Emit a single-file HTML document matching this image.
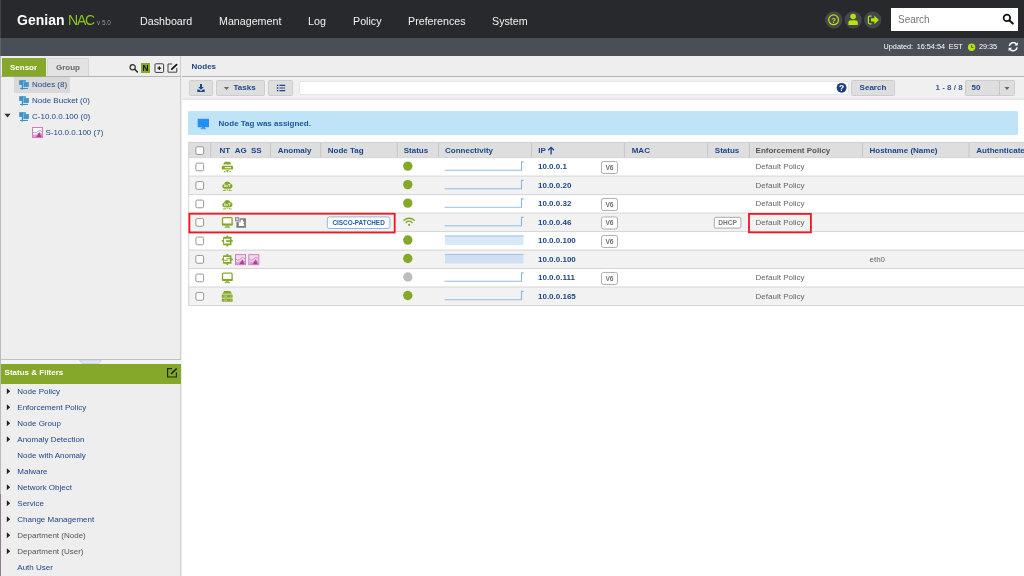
<!DOCTYPE html>
<html><head><meta charset="utf-8">
<style>
*{box-sizing:border-box;margin:0;padding:0}
html,body{width:1024px;height:576px;overflow:hidden;background:#fff;font-family:"Liberation Sans",sans-serif;font-size:8px;color:#1c4587}
.abs,.t,.b{position:absolute;white-space:nowrap}
.t{line-height:10px;height:10px}
.b{font-weight:bold}
#top{will-change:transform;position:absolute;left:0;top:0;width:1024px;height:38px;background:#27292d}
#sub{will-change:transform;position:absolute;left:0;top:38px;width:1024px;height:18px;background:#494e57}
#left{will-change:transform;position:absolute;left:0;top:56px;width:182px;height:520px;background:#eee;border-left:1px solid #bbb;border-right:1px solid #eee}
#main{will-change:transform;position:absolute;left:182px;top:56px;width:842px;height:520px;background:#fff}
.nav{position:absolute;top:14px;height:14px;line-height:14px;font-size:10.7px;color:#f2f2f2;white-space:nowrap}
</style></head><body>
<div id="top">
  <div class="abs" style="left:17px;top:9px;height:22px;line-height:22px;font-size:14px;font-weight:bold;color:#fff;letter-spacing:0.04px">Genian</div>
  <div class="abs" style="left:68px;top:9px;height:22px;line-height:22px;font-size:14px;color:#8cc220;letter-spacing:-1.2px">NAC</div>
  <div class="abs" style="left:97px;top:18px;height:10px;line-height:10px;font-size:6.4px;color:#9a9a9a">v 5.0</div>
  <div class="nav" style="left:140px">Dashboard</div>
  <div class="nav" style="left:219px">Management</div>
  <div class="nav" style="left:308px">Log</div>
  <div class="nav" style="left:353px">Policy</div>
  <div class="nav" style="left:408px">Preferences</div>
  <div class="nav" style="left:492px">System</div>
  <svg class="abs" style="left:824px;top:10px" width="60" height="20" viewBox="0 0 60 20">
    <circle cx="9.8" cy="9.9" r="8.7" fill="#45474a"/><circle cx="29.2" cy="9.9" r="8.6" fill="#45474a"/><circle cx="48.7" cy="9.9" r="8.6" fill="#45474a"/>
    <circle cx="9.6" cy="9.8" r="4.9" fill="none" stroke="#b4e50d" stroke-width="1.2"/>
    <text x="9.6" y="12.7" text-anchor="middle" font-family="Liberation Sans, sans-serif" font-weight="bold" font-size="8" fill="#b4e50d">?</text>
    <circle cx="29.1" cy="6.5" r="2.8" fill="#b4e50d"/><path d="M24.4 14.9V12.6A2.4 2.4 0 0 1 26.8 10.2H31.4A2.4 2.4 0 0 1 33.8 12.6V14.9Z" fill="#b4e50d"/>
    <path d="M47.6 6.2H45.6A1.2 1.2 0 0 0 44.4 7.4V12.6A1.2 1.2 0 0 0 45.6 13.8H47.6" fill="none" stroke="#b4e50d" stroke-width="1.2"/>
    <path d="M47 8.2H50.4V5.6L54.9 9.9L50.4 14.2V11.6H47Z" fill="#b4e50d"/>
  </svg>
  <div class="abs" style="left:891px;top:8px;width:127px;height:23px;background:#fff"></div>
  <div class="abs" style="left:898px;top:13.6px;height:12px;line-height:12px;font-size:10px;color:#777">Search</div>
  <svg class="abs" style="left:1002px;top:13px" width="13" height="12" viewBox="-0.4 -0.6 13 12"><circle cx="4.5" cy="4.3" r="3.3" fill="none" stroke="#111" stroke-width="1.7"/><path d="M7 6.8L10.4 10" stroke="#111" stroke-width="2" stroke-linecap="round"/></svg>
</div>
<div id="sub">
  <div class="abs" style="left:883.6px;top:4.2px;height:10px;line-height:10px;font-size:7.25px;word-spacing:1.7px;color:#fff">Updated: 16:54:54 EST</div>
  <div class="abs" style="left:979px;top:4.2px;height:10px;line-height:10px;font-size:7.25px;color:#fff">29:35</div>
  <svg class="abs" style="left:967px;top:5px" width="9" height="9" viewBox="-0.6 -0.2 9 9"><circle cx="4" cy="4" r="3.7" fill="#b4e50d"/><path d="M4 1.8V4.3H5.8" fill="none" stroke="#494e57" stroke-width="0.9"/></svg>
  <svg class="abs" style="left:1008px;top:4px" width="11" height="10" viewBox="0 0 11 10"><path d="M1.3 4A4 4 0 0 1 8.2 1.9" fill="none" stroke="#fff" stroke-width="1.5"/><path d="M9.8 0.2V3.6H6.4Z" fill="#fff"/><path d="M9.1 5.4A4 4 0 0 1 2.2 7.5" fill="none" stroke="#fff" stroke-width="1.5"/><path d="M0.6 9.2V5.8H4Z" fill="#fff"/></svg>
</div>
<div class="abs" style="left:0;top:0;width:1px;height:56px;background:rgba(255,255,255,0.13)"></div>
<div id="left">
  <div class="abs" style="left:179px;top:0;width:1px;height:520px;background:#cfcfcf"></div>
  <div class="abs" style="left:0;top:20px;width:180px;height:1px;background:#b4b4b4"></div>
  <div class="abs" style="left:1px;top:2px;width:44px;height:19px;background:#86a82a"></div>
  <div class="abs" style="left:1px;top:20px;width:44px;height:1px;background:#98a868"></div>
  <div class="t b" style="left:9px;top:7px;color:#fff">Sensor</div>
  <div class="abs" style="left:46px;top:2px;width:42px;height:18px;background:#e3e3e3;border:1px solid #d4d4d4;border-bottom:none;border-radius:1.5px 1.5px 0 0"></div>
  <div class="t b" style="left:55px;top:7px;color:#666">Group</div>
  <svg class="abs" style="left:128px;top:7px" width="10" height="11" viewBox="0 -0.6 10 11"><circle cx="3.7" cy="3.7" r="2.6" fill="none" stroke="#2a2a2a" stroke-width="1.2"/><path d="M5.7 5.7L8.3 8.3" stroke="#2a2a2a" stroke-width="1.5" stroke-linecap="round"/></svg>
  <div class="abs" style="left:140px;top:7px;width:9px;height:10px;background:#86a82a"></div>
  <div class="t b" style="left:141.4px;top:7px;color:#111;font-size:8.4px">N</div>
  <svg class="abs" style="left:153px;top:7px" width="11" height="11" viewBox="0 0 11 11"><rect x="1" y="0.8" width="8.6" height="8.6" rx="0.9" fill="#f4f4f4" stroke="#3a3a3a" stroke-width="1"/><path d="M5.3 3.2V7M3.4 5.1H7.2" stroke="#222" stroke-width="1.3"/></svg>
  <svg class="abs" style="left:165px;top:7px" width="13" height="11" viewBox="-0.2 0 13 11"><path d="M10.6 5V9.2H1.8V1H6" fill="none" stroke="#444" stroke-width="1"/><path d="M5.6 6.2L10.4 1.6" stroke="#111" stroke-width="1.7" stroke-linecap="round"/></svg>
  <div class="abs" style="left:13px;top:21px;width:56px;height:16px;background:#d9d9d9"></div>
  <svg class="abs" style="left:18px;top:24px" width="11" height="10" viewBox="0 0 11 10"><rect x="0.2" y="0.2" width="6.8" height="4.7" fill="#3d8fc6"/><rect x="2.8" y="4.9" width="1.2" height="3.1" fill="#3d8fc6"/><rect x="1.1" y="7.9" width="7.8" height="1.1" fill="#3d8fc6"/><path d="M2 9L3.2 9.7L4.4 9Z" fill="#3d8fc6"/><rect x="4" y="1.7" width="6.2" height="5.6" fill="#cfe2f1"/><rect x="4.4" y="2.1" width="5.4" height="4.8" fill="#4394c9"/></svg>
  <div class="t" style="left:31px;top:24px">Nodes (8)</div>
  <svg class="abs" style="left:18px;top:40px" width="11" height="10" viewBox="0 0 11 10"><rect x="0.2" y="0.2" width="6.8" height="4.7" fill="#3d8fc6"/><rect x="2.8" y="4.9" width="1.2" height="3.1" fill="#3d8fc6"/><rect x="1.1" y="7.9" width="7.8" height="1.1" fill="#3d8fc6"/><path d="M2 9L3.2 9.7L4.4 9Z" fill="#3d8fc6"/><rect x="4" y="1.7" width="6.2" height="5.6" fill="#cfe2f1"/><rect x="4.4" y="2.1" width="5.4" height="4.8" fill="#4394c9"/></svg>
  <div class="t" style="left:31px;top:40px">Node Bucket (0)</div>
  <svg class="abs" style="left:3px;top:57px" width="7" height="5" viewBox="-0.4 -0.8 7 5"><path d="M0 0H6.2L3.1 3.6Z" fill="#333"/></svg>
  <svg class="abs" style="left:18px;top:56px" width="11" height="10" viewBox="0 0 11 10"><rect x="0.2" y="0.2" width="6.8" height="4.7" fill="#3d8fc6"/><rect x="2.8" y="4.9" width="1.2" height="3.1" fill="#3d8fc6"/><rect x="1.1" y="7.9" width="7.8" height="1.1" fill="#3d8fc6"/><path d="M2 9L3.2 9.7L4.4 9Z" fill="#3d8fc6"/><rect x="4" y="1.7" width="6.2" height="5.6" fill="#cfe2f1"/><rect x="4.4" y="2.1" width="5.4" height="4.8" fill="#4394c9"/></svg>
  <div class="t" style="left:31px;top:56px">C-10.0.0.100 (0)</div>
  <svg class="abs" style="left:31px;top:71px" width="11" height="11" viewBox="0 0 11 11"><rect x="0.5" y="0.5" width="10" height="10" fill="#fff" stroke="#cf7fbd" stroke-width="1"/><path d="M1 10V6.9L2.8 7.6L4.6 7.2L7.4 4.6L9 5.8L10 6.6V10Z" fill="#dd9fcf"/><path d="M4.2 10L7.4 5.6L9.6 10Z" fill="#b53a98"/><path d="M1 6.9L2.8 7.6L4.6 7.2L7.4 4.6L9 5.8L10 6.6" fill="none" stroke="#fff" stroke-width="0.6" stroke-dasharray="0.8 0.6"/><path d="M1 5.2L2.6 6L4.4 5.6L7.4 3.2L9 4L10 4.9" fill="none" stroke="#d88cc8" stroke-width="1"/></svg>
  <div class="t" style="left:44.5px;top:72px">S-10.0.0.100 (7)</div>
  <div class="abs" style="left:0;top:303px;width:180px;height:1px;background:#c2c2c2"></div>
  <div class="abs" style="left:0;top:304px;width:180px;height:4px;background:#f3f3f3"></div>
  <svg class="abs" style="left:78px;top:304px" width="23" height="4" viewBox="0 0 23 4"><path d="M0.5 0H22.5L20 3.5H3Z" fill="#dfe6f6" stroke="#b9c4dd" stroke-width="0.6"/></svg>
  <div class="abs" style="left:0;top:308px;width:180px;height:20px;background:#86a82a"></div>
  <div class="t b" style="left:3.6px;top:312px;color:#fff">Status &amp; Filters</div>
  <svg class="abs" style="left:165px;top:311px" width="12" height="11" viewBox="0 0 12 11"><path d="M10.4 5.4V10H1.6V1.6H6" fill="none" stroke="#1e2a10" stroke-width="1.2"/><path d="M5.6 6.4L10.2 2" stroke="#1e2a10" stroke-width="1.7" stroke-linecap="round"/></svg>
  <svg class="abs" style="left:5px;top:332px" width="5" height="7" viewBox="-0.8 -0.2 5 7"><path d="M0 0L3.4 3L0 6Z" fill="#222"/></svg>
  <div class="t" style="left:16.3px;top:331.4px">Node Policy</div>
  <svg class="abs" style="left:5px;top:348px" width="5" height="7" viewBox="-0.8 -0.2 5 7"><path d="M0 0L3.4 3L0 6Z" fill="#222"/></svg>
  <div class="t" style="left:16.3px;top:347.4px">Enforcement Policy</div>
  <svg class="abs" style="left:5px;top:364px" width="5" height="7" viewBox="-0.8 -0.2 5 7"><path d="M0 0L3.4 3L0 6Z" fill="#222"/></svg>
  <div class="t" style="left:16.3px;top:363.4px">Node Group</div>
  <svg class="abs" style="left:5px;top:380px" width="5" height="7" viewBox="-0.8 -0.2 5 7"><path d="M0 0L3.4 3L0 6Z" fill="#222"/></svg>
  <div class="t" style="left:16.3px;top:379.4px">Anomaly Detection</div>
  <div class="t" style="left:16.3px;top:395.4px">Node with Anomaly</div>
  <svg class="abs" style="left:5px;top:412px" width="5" height="7" viewBox="-0.8 -0.2 5 7"><path d="M0 0L3.4 3L0 6Z" fill="#222"/></svg>
  <div class="t" style="left:16.3px;top:411.4px">Malware</div>
  <svg class="abs" style="left:5px;top:428px" width="5" height="7" viewBox="-0.8 -0.2 5 7"><path d="M0 0L3.4 3L0 6Z" fill="#222"/></svg>
  <div class="t" style="left:16.3px;top:427.4px">Network Object</div>
  <svg class="abs" style="left:5px;top:444px" width="5" height="7" viewBox="-0.8 -0.2 5 7"><path d="M0 0L3.4 3L0 6Z" fill="#222"/></svg>
  <div class="t" style="left:16.3px;top:443.4px">Service</div>
  <svg class="abs" style="left:5px;top:460px" width="5" height="7" viewBox="-0.8 -0.2 5 7"><path d="M0 0L3.4 3L0 6Z" fill="#222"/></svg>
  <div class="t" style="left:16.3px;top:459.4px">Change Management</div>
  <svg class="abs" style="left:5px;top:476px" width="5" height="7" viewBox="-0.8 -0.2 5 7"><path d="M0 0L3.4 3L0 6Z" fill="#222"/></svg>
  <div class="t" style="left:16.3px;top:475.4px;color:#555">Department (Node)</div>
  <svg class="abs" style="left:5px;top:492px" width="5" height="7" viewBox="-0.8 -0.2 5 7"><path d="M0 0L3.4 3L0 6Z" fill="#222"/></svg>
  <div class="t" style="left:16.3px;top:491.4px;color:#555">Department (User)</div>
  <div class="t" style="left:16.3px;top:507.4px">Auth User</div>
</div>
<div class="abs" style="left:0;top:494px;width:1px;height:82px;background:#8f7c90"></div>
<div id="main">
<div class="abs" style="left:0;top:0;width:842px;height:20px;background:#eee"></div>
<div class="abs" style="left:0;top:20px;width:842px;height:1px;background:#b4b4b4"></div>
<div class="t b" style="left:9.6px;top:6px">Nodes</div>
<div class="abs" style="left:0;top:21px;width:842px;height:21.5px;background:#f1f0f0"></div>
<div class="abs" style="left:0;top:42px;width:842px;height:1px;background:#e9e8e8"></div><div class="abs" style="left:0;top:43px;width:842px;height:1px;background:#e6e6e6"></div>
<div class="abs" style="left:7px;top:24px;width:24px;height:16px;background:#dedede;border:1px solid #cdcdcd;border-radius:1.5px"><svg class="abs" style="left:7px;top:3px" width="8" height="8" viewBox="0 0 8 8"><path d="M3 0H5V3H6.8L4 5.8L1.2 3H3Z" fill="#1c4587"/><path d="M0.3 5.6H2.2L4 7.2L5.8 5.6H7.7V8H0.3Z" fill="#1c4587"/></svg></div>
<div class="abs" style="left:34px;top:24px;width:48.5px;height:16px;background:#dedede;border:1px solid #cdcdcd;border-radius:1.5px"><svg class="abs" style="left:7px;top:6px" width="5" height="3" viewBox="0 0 5 3"><path d="M0 0H5L2.5 3Z" fill="#666"/></svg><div class="t b" style="left:16.5px;top:2px">Tasks</div></div>
<div class="abs" style="left:86px;top:24px;width:25.4px;height:16px;background:#dedede;border:1px solid #cdcdcd;border-radius:1.5px"><svg class="abs" style="left:7px;top:3px" width="10" height="8" viewBox="-0.8 -0.5 10 8"><path d="M0 0.2H1.5V1.6H0ZM0 2.8H1.5V4.2H0ZM0 5.4H1.5V6.8H0ZM2.6 0.3H8.4V1.5H2.6ZM2.6 2.9H8.4V4.1H2.6ZM2.6 5.5H8.4V6.7H2.6Z" fill="#1c4587"/></svg></div>
<div class="abs" style="left:116.5px;top:24.5px;width:550px;height:14px;background:#fff;border:1px solid #e4e4e4;border-radius:2px"></div>
<svg class="abs" style="left:654px;top:26px" width="11" height="11" viewBox="-0.6 -0.8 11 11"><circle cx="5" cy="5" r="4.9" fill="#1c3f7c"/><text x="5" y="8" text-anchor="middle" font-family="Liberation Sans, sans-serif" font-weight="bold" font-size="8.4" fill="#fff">?</text></svg>
<div class="abs" style="left:669px;top:24px;width:44px;height:16px;background:#dedede;border:1px solid #cdcdcd;border-radius:1.5px"><div class="t b" style="left:7.6px;top:2px">Search</div></div>
<div class="t b" style="left:753.5px;top:27px;color:#3a5b9b">1 - 8 / 8</div>
<div class="abs" style="left:783px;top:24px;width:50px;height:16px;background:#dedede;border:1px solid #cdcdcd;border-radius:1.5px"><div class="t b" style="left:5.6px;top:2px">50</div><div class="abs" style="left:33px;top:0;width:1px;height:14px;background:#c4c4c4"></div><svg class="abs" style="left:38px;top:6px" width="6" height="3" viewBox="-0.5 0 6 3"><path d="M0 0H5L2.5 3Z" fill="#666"/></svg></div>
<div class="abs" style="left:6.4px;top:55.4px;width:829.6px;height:23.2px;background:#bfe3f7;border-radius:1.5px"></div>
<svg class="abs" style="left:15px;top:62px" width="13" height="12" viewBox="-0.4 -0.6 13 12"><rect x="0.7" y="0.6" width="10.4" height="7.6" fill="#1e90ff" stroke="#2a80d6" stroke-width="0.8"/><rect x="4.2" y="8.6" width="3.4" height="1.1" fill="#2a80d6"/><rect x="3.2" y="9.7" width="5.4" height="0.9" fill="#3d8fdc"/></svg>
<div class="t b" style="left:36.6px;top:63.2px;color:#1c5799">Node Tag was assigned.</div>
<svg class="abs" style="left:0;top:84px" width="842" height="170" viewBox="182 140 842 170"><rect x="188.2" y="141.9" width="835.8" height="15.70" fill="#dedede"/><rect x="188.2" y="157.60" width="835.8" height="18.49" fill="#fff"/><rect x="188.2" y="176.09" width="835.8" height="18.49" fill="#f2f2f2"/><rect x="188.2" y="194.58" width="835.8" height="18.49" fill="#fff"/><rect x="188.2" y="213.07" width="835.8" height="18.49" fill="#f2f2f2"/><rect x="188.2" y="231.56" width="835.8" height="18.49" fill="#fff"/><rect x="188.2" y="250.05" width="835.8" height="18.49" fill="#f2f2f2"/><rect x="188.2" y="268.54" width="835.8" height="18.49" fill="#fff"/><rect x="188.2" y="287.03" width="835.8" height="18.49" fill="#f2f2f2"/><path d="M188.2 142.4H1024" stroke="#d2d2d2" stroke-width="1" fill="none"/><path d="M188.2 157.60H1024" stroke="#d4d4d4" stroke-width="1" fill="none"/><path d="M188.2 176.09H1024" stroke="#d4d4d4" stroke-width="1" fill="none"/><path d="M188.2 194.58H1024" stroke="#d4d4d4" stroke-width="1" fill="none"/><path d="M188.2 213.07H1024" stroke="#d4d4d4" stroke-width="1" fill="none"/><path d="M188.2 231.56H1024" stroke="#d4d4d4" stroke-width="1" fill="none"/><path d="M188.2 250.05H1024" stroke="#d4d4d4" stroke-width="1" fill="none"/><path d="M188.2 268.54H1024" stroke="#d4d4d4" stroke-width="1" fill="none"/><path d="M188.2 287.03H1024" stroke="#d4d4d4" stroke-width="1" fill="none"/><path d="M188.2 305.52H1024" stroke="#d4d4d4" stroke-width="1" fill="none"/><path d="M188.7 142V305.52" stroke="#d4d4d4" stroke-width="1" fill="none"/><path d="M210.7 143V157.10" stroke="#c4c4c4" stroke-width="1" fill="none"/><path d="M270.4 143V157.10" stroke="#c4c4c4" stroke-width="1" fill="none"/><path d="M320.7 143V157.10" stroke="#c4c4c4" stroke-width="1" fill="none"/><path d="M397.3 143V157.10" stroke="#c4c4c4" stroke-width="1" fill="none"/><path d="M438.5 143V157.10" stroke="#c4c4c4" stroke-width="1" fill="none"/><path d="M531.4 143V157.10" stroke="#c4c4c4" stroke-width="1" fill="none"/><path d="M624.4 143V157.10" stroke="#c4c4c4" stroke-width="1" fill="none"/><path d="M707.7 143V157.10" stroke="#c4c4c4" stroke-width="1" fill="none"/><path d="M749.4 143V157.10" stroke="#c4c4c4" stroke-width="1" fill="none"/><path d="M862.4 143V157.10" stroke="#c4c4c4" stroke-width="1" fill="none"/><path d="M969 143V157.10" stroke="#c4c4c4" stroke-width="1" fill="none"/></svg>
<div class="t b" style="left:37.5px;top:89.6px">NT</div>
<div class="t b" style="left:52.8px;top:89.6px">AG</div>
<div class="t b" style="left:68.9px;top:89.6px">SS</div>
<div class="t b" style="left:95.7px;top:89.6px">Anomaly</div>
<div class="t b" style="left:145.8px;top:89.6px">Node Tag</div>
<div class="t b" style="left:221.7px;top:89.6px">Status</div>
<div class="t b" style="left:263px;top:89.6px">Connectivity</div>
<div class="t b" style="left:356.2px;top:89.6px">IP</div>
<div class="t b" style="left:449.7px;top:89.6px">MAC</div>
<div class="t b" style="left:532.8px;top:89.6px">Status</div>
<div class="t b" style="left:573.6px;top:89.6px;color:#555">Enforcement Policy</div>
<div class="t b" style="left:687.5px;top:89.6px">Hostname (Name)</div>
<div class="t b" style="left:794.3px;top:89.6px">Authenticated User</div>
<svg class="abs" style="left:365px;top:90px" width="8" height="9" viewBox="-0.6 -0.6 8 9"><path d="M3.5 0.6V8M0.6 3.6L3.5 0.7L6.4 3.6" fill="none" stroke="#1c4587" stroke-width="1.3"/></svg>
<svg class="abs" style="left:13px;top:89px" width="10" height="11" viewBox="0 -0.9 10 11"><rect x="0.9" y="0.9" width="7.7" height="7.7" rx="1.3" fill="#fff" stroke="#8c8c8c" stroke-width="0.9"/></svg>
<svg class="abs" style="left:13px;top:106px" width="10" height="10" viewBox="0 -0.2 10 10"><rect x="0.9" y="0.9" width="7.7" height="7.7" rx="1.3" fill="#fff" stroke="#8c8c8c" stroke-width="0.9"/></svg>
<svg class="abs" style="left:13px;top:124px" width="10" height="11" viewBox="0 -0.69 10 11"><rect x="0.9" y="0.9" width="7.7" height="7.7" rx="1.3" fill="#fff" stroke="#8c8c8c" stroke-width="0.9"/></svg>
<svg class="abs" style="left:13px;top:143px" width="10" height="10" viewBox="0 -0.18 10 10"><rect x="0.9" y="0.9" width="7.7" height="7.7" rx="1.3" fill="#fff" stroke="#8c8c8c" stroke-width="0.9"/></svg>
<svg class="abs" style="left:13px;top:161px" width="10" height="11" viewBox="0 -0.67 10 11"><rect x="0.9" y="0.9" width="7.7" height="7.7" rx="1.3" fill="#fff" stroke="#8c8c8c" stroke-width="0.9"/></svg>
<svg class="abs" style="left:13px;top:180px" width="10" height="10" viewBox="0 -0.16 10 10"><rect x="0.9" y="0.9" width="7.7" height="7.7" rx="1.3" fill="#fff" stroke="#8c8c8c" stroke-width="0.9"/></svg>
<svg class="abs" style="left:13px;top:198px" width="10" height="11" viewBox="0 -0.65 10 11"><rect x="0.9" y="0.9" width="7.7" height="7.7" rx="1.3" fill="#fff" stroke="#8c8c8c" stroke-width="0.9"/></svg>
<svg class="abs" style="left:13px;top:217px" width="10" height="10" viewBox="0 -0.14 10 10"><rect x="0.9" y="0.9" width="7.7" height="7.7" rx="1.3" fill="#fff" stroke="#8c8c8c" stroke-width="0.9"/></svg>
<svg class="abs" style="left:13px;top:235px" width="10" height="11" viewBox="0 -0.63 10 11"><rect x="0.9" y="0.9" width="7.7" height="7.7" rx="1.3" fill="#fff" stroke="#8c8c8c" stroke-width="0.9"/></svg>
<svg class="abs" style="left:220px;top:105px" width="11" height="11" viewBox="-0.8 -0.1 11 11"><circle cx="5" cy="5" r="4.7" fill="#86a82a"/></svg>
<svg class="abs" style="left:220px;top:123px" width="11" height="11" viewBox="-0.8 -0.59 11 11"><circle cx="5" cy="5" r="4.7" fill="#86a82a"/></svg>
<svg class="abs" style="left:220px;top:142px" width="11" height="11" viewBox="-0.8 -0.08 11 11"><circle cx="5" cy="5" r="4.7" fill="#86a82a"/></svg>
<svg class="abs" style="left:221px;top:160px" width="13" height="11" viewBox="-0.1 -0.97 13 11"><path d="M0.9 3.3A7.3 7.3 0 0 1 11.1 3.3" fill="none" stroke="#86a82a" stroke-width="1.4" stroke-linecap="round"/><path d="M3 5.5A4.4 4.4 0 0 1 9 5.5" fill="none" stroke="#86a82a" stroke-width="1.4" stroke-linecap="round"/><circle cx="6" cy="7.9" r="1.1" fill="#86a82a"/></svg>
<svg class="abs" style="left:220px;top:179px" width="11" height="11" viewBox="-0.8 -0.06 11 11"><circle cx="5" cy="5" r="4.7" fill="#86a82a"/></svg>
<svg class="abs" style="left:220px;top:197px" width="11" height="11" viewBox="-0.8 -0.55 11 11"><circle cx="5" cy="5" r="4.7" fill="#86a82a"/></svg>
<svg class="abs" style="left:220px;top:216px" width="11" height="11" viewBox="-0.8 -0.04 11 11"><circle cx="5" cy="5" r="4.7" fill="#bdbdbd"/></svg>
<svg class="abs" style="left:220px;top:234px" width="11" height="11" viewBox="-0.8 -0.53 11 11"><circle cx="5" cy="5" r="4.7" fill="#86a82a"/></svg>
<svg class="abs" style="left:262px;top:104px" width="81" height="13" viewBox="-0.6 -0.6 81 13"><path d="M0 9.7H76.9" fill="none" stroke="#86b7ea" stroke-width="0.9"/><path d="M76.9 10.1V1.3H79" fill="none" stroke="#86b7ea" stroke-width="1.1"/></svg>
<svg class="abs" style="left:262px;top:123px" width="81" height="13" viewBox="-0.6 -0.09 81 13"><path d="M0 9.7H76.9" fill="none" stroke="#86b7ea" stroke-width="0.9"/><path d="M76.9 10.1V1.3H79" fill="none" stroke="#86b7ea" stroke-width="1.1"/></svg>
<svg class="abs" style="left:262px;top:141px" width="81" height="13" viewBox="-0.6 -0.58 81 13"><path d="M0 9.7H76.9" fill="none" stroke="#86b7ea" stroke-width="0.9"/><path d="M76.9 10.1V1.3H79" fill="none" stroke="#86b7ea" stroke-width="1.1"/></svg>
<svg class="abs" style="left:262px;top:160px" width="81" height="13" viewBox="-0.6 -0.07 81 13"><path d="M0 9.7H76.9" fill="none" stroke="#86b7ea" stroke-width="0.9"/><path d="M76.9 10.1V1.3H79" fill="none" stroke="#86b7ea" stroke-width="1.1"/></svg>
<svg class="abs" style="left:262px;top:178px" width="81" height="13" viewBox="-0.6 -0.56 81 13"><rect x="0.4" y="1.2" width="78.4" height="9.2" fill="#d9e8f7"/><path d="M0.2 1.4H79.2" stroke="#96bdea" stroke-width="0.9"/></svg>
<svg class="abs" style="left:262px;top:197px" width="81" height="13" viewBox="-0.6 -0.05 81 13"><rect x="0.4" y="1.2" width="78.4" height="9.2" fill="#cfe0f2"/><path d="M0.2 1.4H79.2" stroke="#96bdea" stroke-width="0.9"/></svg>
<svg class="abs" style="left:262px;top:215px" width="81" height="13" viewBox="-0.6 -0.54 81 13"><path d="M0 9.7H76.9" fill="none" stroke="#86b7ea" stroke-width="0.9"/><path d="M76.9 10.1V1.3H79" fill="none" stroke="#86b7ea" stroke-width="1.1"/></svg>
<svg class="abs" style="left:262px;top:234px" width="81" height="13" viewBox="-0.6 -0.03 81 13"><path d="M0 9.7H76.9" fill="none" stroke="#86b7ea" stroke-width="0.9"/><path d="M76.9 10.1V1.3H79" fill="none" stroke="#86b7ea" stroke-width="1.1"/></svg>
<div class="t b" style="left:356px;top:106.30px">10.0.0.1</div>
<div class="t b" style="left:356px;top:124.79px">10.0.0.20</div>
<div class="t b" style="left:356px;top:143.28px">10.0.0.32</div>
<div class="t b" style="left:356px;top:161.77px">10.0.0.46</div>
<div class="t b" style="left:356px;top:180.26px">10.0.0.100</div>
<div class="t b" style="left:356px;top:198.75px">10.0.0.100</div>
<div class="t b" style="left:356px;top:217.24px">10.0.0.111</div>
<div class="t b" style="left:356px;top:235.73px">10.0.0.165</div>
<svg class="abs" style="left:419px;top:105px" width="17" height="13" viewBox="0 0 17 13"><rect x="0.5" y="0.5" width="16" height="12" rx="2" fill="#fff" stroke="#a4a4a4" stroke-width="0.9"/><text x="8.5" y="8.91" text-anchor="middle" font-family="Liberation Sans, sans-serif" font-weight="bold" font-size="6.7" fill="#707070">V6</text></svg>
<svg class="abs" style="left:419px;top:141px" width="17" height="14" viewBox="0 -0.98 17 14"><rect x="0.5" y="0.5" width="16" height="12" rx="2" fill="#fff" stroke="#a4a4a4" stroke-width="0.9"/><text x="8.5" y="8.91" text-anchor="middle" font-family="Liberation Sans, sans-serif" font-weight="bold" font-size="6.7" fill="#707070">V6</text></svg>
<svg class="abs" style="left:419px;top:160px" width="17" height="14" viewBox="0 -0.47 17 14"><rect x="0.5" y="0.5" width="16" height="12" rx="2" fill="#fff" stroke="#a4a4a4" stroke-width="0.9"/><text x="8.5" y="8.91" text-anchor="middle" font-family="Liberation Sans, sans-serif" font-weight="bold" font-size="6.7" fill="#707070">V6</text></svg>
<svg class="abs" style="left:419px;top:178px" width="17" height="14" viewBox="0 -0.96 17 14"><rect x="0.5" y="0.5" width="16" height="12" rx="2" fill="#fff" stroke="#a4a4a4" stroke-width="0.9"/><text x="8.5" y="8.91" text-anchor="middle" font-family="Liberation Sans, sans-serif" font-weight="bold" font-size="6.7" fill="#707070">V6</text></svg>
<svg class="abs" style="left:419px;top:215px" width="17" height="14" viewBox="0 -0.94 17 14"><rect x="0.5" y="0.5" width="16" height="12" rx="2" fill="#fff" stroke="#a4a4a4" stroke-width="0.9"/><text x="8.5" y="8.91" text-anchor="middle" font-family="Liberation Sans, sans-serif" font-weight="bold" font-size="6.7" fill="#707070">V6</text></svg>
<svg class="abs" style="left:531px;top:160px" width="29" height="13" viewBox="-0.8 -0.8 29 13"><rect x="0.5" y="0.5" width="26.6" height="10.8" rx="1.6" fill="#fff" stroke="#a4a4a4" stroke-width="0.9"/><text x="13.8" y="8.28" text-anchor="middle" font-family="Liberation Sans, sans-serif" font-weight="bold" font-size="6.6" fill="#777">DHCP</text></svg>
<svg class="abs" style="left:144px;top:160px" width="65" height="13" viewBox="-0.8 -0.4 65 13"><rect x="0.5" y="0.5" width="62.6" height="11.6" rx="2" fill="#fff" stroke="#7fb2e0" stroke-width="0.9"/><text x="31.8" y="8.60" text-anchor="middle" font-family="Liberation Sans, sans-serif" font-weight="bold" font-size="6.4" fill="#1f5fa8">CISCO-PATCHED</text></svg>
<div class="t" style="left:573.6px;top:106.30px;color:#666">Default Policy</div>
<div class="t" style="left:573.6px;top:124.79px;color:#666">Default Policy</div>
<div class="t" style="left:573.6px;top:143.28px;color:#666">Default Policy</div>
<div class="t" style="left:573.6px;top:161.77px;color:#666">Default Policy</div>
<div class="t" style="left:573.6px;top:217.24px;color:#666">Default Policy</div>
<div class="t" style="left:573.6px;top:235.73px;color:#666">Default Policy</div>
<div class="t" style="left:687.5px;top:198.75px;color:#666">eth0</div>
<svg class="abs" style="left:39px;top:105px" width="14" height="13" viewBox="0 0 14 13"><g transform="translate(0.6 0.8)"><path d="M3.2 0H8.2L9.9 2.8H1.5Z" fill="#86a82a"/><rect x="0.2" y="3.9" width="11.2" height="3.9" rx="0.7" fill="#86a82a"/><rect x="3.2" y="5.4" width="6.2" height="1" fill="#fff"/><path d="M5.8 8.2V9.2M3.2 10L4.2 9H7.4L8.4 10" fill="none" stroke="#86a82a" stroke-width="0.8"/><circle cx="3" cy="9.9" r="0.65" fill="#86a82a"/><circle cx="8.6" cy="9.9" r="0.65" fill="#86a82a"/><circle cx="5.8" cy="9.9" r="0.65" fill="#86a82a"/></g></svg>
<svg class="abs" style="left:39px;top:125px" width="13" height="12" viewBox="0 0 13 12"><g transform="translate(0.8 0.09)"><path d="M2.6 7.6A2.4 2.4 0 0 1 2.2 2.9A3.4 3.4 0 0 1 8.6 2.3A2.7 2.7 0 0 1 8.6 7.6Z" fill="#86a82a"/><text x="5.5" y="6.4" text-anchor="middle" font-family="Liberation Sans, sans-serif" font-weight="bold" font-size="4.2" fill="#fff">IoT</text><path d="M5.5 7.8V9.6M1.2 9.4H4M7 9.4H9.8M3.4 8.2V9.4M7.6 8.2V9.4" fill="none" stroke="#86a82a" stroke-width="0.8"/></g></svg>
<svg class="abs" style="left:39px;top:143px" width="13" height="12" viewBox="0 0 13 12"><g transform="translate(0.8 0.58)"><path d="M2.6 7.6A2.4 2.4 0 0 1 2.2 2.9A3.4 3.4 0 0 1 8.6 2.3A2.7 2.7 0 0 1 8.6 7.6Z" fill="#86a82a"/><text x="5.5" y="6.4" text-anchor="middle" font-family="Liberation Sans, sans-serif" font-weight="bold" font-size="4.2" fill="#fff">IoT</text><path d="M5.5 7.8V9.6M1.2 9.4H4M7 9.4H9.8M3.4 8.2V9.4M7.6 8.2V9.4" fill="none" stroke="#86a82a" stroke-width="0.8"/></g></svg>
<svg class="abs" style="left:39px;top:160px" width="13" height="13" viewBox="0 0 13 13"><g transform="translate(0.8 0.97)"><rect x="0.7" y="0.7" width="9.6" height="7.2" rx="0.9" fill="#fff" fill-opacity="0.8" stroke="#86a82a" stroke-width="1.3"/><rect x="0.2" y="6.5" width="10.6" height="1.8" fill="#86a82a"/><path d="M4.3 8.3H6.7L7.4 10H3.6Z" fill="#86a82a" fill-opacity="0.7"/><rect x="2.8" y="9.8" width="5.4" height="0.9" fill="#86a82a"/></g></svg>
<svg class="abs" style="left:39px;top:216px" width="13" height="13" viewBox="0 0 13 13"><g transform="translate(0.8 0.44)"><rect x="0.7" y="0.7" width="9.6" height="7.2" rx="0.9" fill="#fff" fill-opacity="0.8" stroke="#86a82a" stroke-width="1.3"/><rect x="0.2" y="6.5" width="10.6" height="1.8" fill="#86a82a"/><path d="M4.3 8.3H6.7L7.4 10H3.6Z" fill="#86a82a" fill-opacity="0.7"/><rect x="2.8" y="9.8" width="5.4" height="0.9" fill="#86a82a"/></g></svg>
<svg class="abs" style="left:53px;top:161px" width="12" height="12" viewBox="0 0 12 12"><g transform="translate(0 0)"><path d="M4.6 1.2H10.9V10.7H1.4V4.7H4.6Z" fill="#7c7c7c"/><path d="M5.6 2.8H8V4.4H9.2V6.1H8.5V7.3H9.2V9.1H3.7V5.2H5.6Z" fill="#fff"/><rect x="0.5" y="0.5" width="3.2" height="3.2" fill="#d4d4d4" stroke="#858585" stroke-width="0.8"/></g></svg>
<svg class="abs" style="left:39px;top:179px" width="13" height="13" viewBox="0 0 13 13"><g transform="translate(0.8 0.46)"><rect x="1.3" y="1.3" width="8.4" height="8.4" rx="0.5" fill="#86a82a"/><rect x="4.6" y="0" width="1.8" height="11" rx="0.4" fill="#86a82a"/><rect x="0" y="4.6" width="11" height="1.8" rx="0.4" fill="#86a82a"/><path d="M2.2 3.3H8V4.7H4.3V6.5H8V8.1H2.2Z" fill="#fff"/></g></svg>
<svg class="abs" style="left:39px;top:197px" width="13" height="13" viewBox="0 0 13 13"><g transform="translate(0.8 0.95)"><rect x="1.3" y="1.3" width="8.4" height="8.4" rx="0.5" fill="#86a82a"/><rect x="4.6" y="0" width="1.8" height="11" rx="0.4" fill="#86a82a"/><rect x="0" y="4.6" width="11" height="1.8" rx="0.4" fill="#86a82a"/><path d="M2.2 3.1H8V4.2H4.6V5.3H8V8H2.2V6.9H5.8V5.9H2.2Z" fill="#fff"/></g></svg>
<svg class="abs" style="left:53px;top:198px" width="12" height="13" viewBox="0 0 12 13"><g transform="translate(0 0.15)"><rect x="0.5" y="0.5" width="10" height="10" fill="#f3d9ec" stroke="#cf7fbd" stroke-width="1"/><path d="M1 10V6.9L2.8 7.6L4.6 7.2L7.4 4.6L9 5.8L10 6.6V10Z" fill="#dd9fcf"/><path d="M4.2 10L7.4 5.6L9.6 10Z" fill="#b53a98"/><path d="M1 6.9L2.8 7.6L4.6 7.2L7.4 4.6L9 5.8L10 6.6" fill="none" stroke="#fff" stroke-width="0.6" stroke-dasharray="0.8 0.6"/><path d="M1 5.2L2.6 6L4.4 5.6L7.4 3.2L9 4L10 4.9" fill="none" stroke="#d88cc8" stroke-width="1"/></g></svg>
<svg class="abs" style="left:66px;top:198px" width="13" height="13" viewBox="0 0 13 13"><g transform="translate(0.3 0.15)"><rect x="0.5" y="0.5" width="10" height="10" fill="#f3d9ec" stroke="#cf7fbd" stroke-width="1"/><path d="M1 10V6.9L2.8 7.6L4.6 7.2L7.4 4.6L9 5.8L10 6.6V10Z" fill="#dd9fcf"/><path d="M4.2 10L7.4 5.6L9.6 10Z" fill="#b53a98"/><path d="M1 6.9L2.8 7.6L4.6 7.2L7.4 4.6L9 5.8L10 6.6" fill="none" stroke="#fff" stroke-width="0.6" stroke-dasharray="0.8 0.6"/><path d="M1 5.2L2.6 6L4.4 5.6L7.4 3.2L9 4L10 4.9" fill="none" stroke="#d88cc8" stroke-width="1"/></g></svg>
<svg class="abs" style="left:39px;top:235px" width="13" height="13" viewBox="0 0 13 13"><g transform="translate(0.6 0.03)"><path d="M2.6 0H8.6L10.4 2.6H0.8Z" fill="#86a82a"/><rect x="0.2" y="3.4" width="10.8" height="3.3" rx="0.5" fill="#86a82a"/><rect x="0.2" y="7.5" width="10.8" height="3.3" rx="0.5" fill="#86a82a"/><rect x="2" y="4.7" width="3.6" height="0.7" fill="#dbe6bd"/><rect x="2" y="8.8" width="3.6" height="0.7" fill="#dbe6bd"/><rect x="8.4" y="4.7" width="1.4" height="0.7" fill="#dbe6bd"/><rect x="8.4" y="8.8" width="1.4" height="0.7" fill="#dbe6bd"/></g></svg>
<svg class="abs" style="left:5px;top:155px" width="210" height="24" viewBox="187 211 210 24"><rect x="189.4" y="213.7" width="205.30" height="18.80" fill="none" stroke="#f5151d" stroke-width="1.8"/></svg>
<svg class="abs" style="left:565px;top:155px" width="66" height="24" viewBox="747 211 66 24"><rect x="749.0" y="213.9" width="61.90" height="18.45" fill="none" stroke="#f5151d" stroke-width="1.8"/></svg>
</div>
</body></html>
